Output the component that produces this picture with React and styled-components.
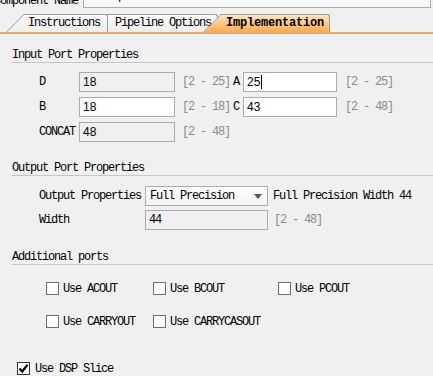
import React from "react";
import styled, { createGlobalStyle } from "styled-components";

const Global = createGlobalStyle`
  html, body { margin: 0; padding: 0; background: #f0f0f0; }
  body {
    font-family: "Liberation Mono", "DejaVu Sans Mono", monospace;
    font-size: 12px;
    letter-spacing: -1.2px;
    color: #000;
    overflow: hidden;
  }
`;

const Page = styled.div`
  width: 433px;
  height: 376px;
  overflow: hidden;
  background: #f0f0f0;
`;

const Header = styled.div`
  display: flex;
  align-items: flex-end;
  height: 8px;
  overflow: hidden;
`;

const HeaderLabel = styled.span`
  margin-left: -6px;
  width: 89px;
  flex: none;
  line-height: 16px;
  margin-bottom: -1px;
  white-space: nowrap;
`;

const NameField = styled.div`
  box-sizing: border-box;
  width: 348px;
  height: 20px;
  flex: none;
  border: 1px solid #acacac;
  background: #f7f7f7;
  padding: 0 4px;
  line-height: 14px;
`;

const TabBar = styled.div`
  display: flex;
  align-items: flex-end;
  margin-top: 5px;
  height: 19px;
  padding-left: 25px;
  border-bottom: 2px solid #f5a452;
`;

const Tab = styled.div`
  position: relative;
  z-index: ${(p) => p.$z};
  box-sizing: border-box;
  height: 18px;
  width: ${(p) => p.$w}px;
  margin-left: ${(p) => p.$ml || 0}px;
  padding-left: ${(p) => p.$pl}px;
  border-top: 1px solid #9c9c9c;
  border-right: 1px solid #9c9c9c;
  border-top-right-radius: 3px;
  background: ${(p) =>
    p.$active
      ? "linear-gradient(to bottom, #ffe6c2, #ffa94f)"
      : "linear-gradient(to bottom, #fbfbfb, #ededed)"};
  font-weight: ${(p) => (p.$active ? "bold" : "normal")};
  letter-spacing: ${(p) => (p.$active ? "-0.2px" : "-1.2px")};
  line-height: 17px;
  white-space: nowrap;
  &::before {
    content: "";
    position: absolute;
    z-index: -1;
    top: -1px;
    bottom: 0;
    left: -19px;
    width: 21px;
    background: inherit;
    border-top: 1px solid #9c9c9c;
    border-left: 1px solid #9c9c9c;
    transform: skewX(-45deg);
    transform-origin: bottom left;
  }
`;

const Content = styled.div`
  padding-left: 12px;
`;

const SectionHeading = styled.div`
  margin-top: ${(p) => p.$mt}px;
  height: 14px;
  line-height: 14px;
  border-bottom: 1px solid #c6c6c6;
  white-space: nowrap;
`;

const InputGrid = styled.div`
  display: grid;
  grid-template-columns: 40px 96px 58px 10px 94px auto;
  grid-auto-rows: 20px;
  row-gap: 5px;
  align-items: center;
  margin-top: 9px;
  padding-left: 27px;
`;

const OutputGrid = styled.div`
  display: grid;
  grid-template-columns: 106px 123px auto;
  grid-auto-rows: 20px;
  row-gap: 4px;
  align-items: center;
  margin-top: 10px;
  padding-left: 27px;
`;

const Label = styled.span`
  white-space: nowrap;
`;

const Field = styled.div`
  box-sizing: border-box;
  height: 20px;
  border: 1px solid #acacac;
  background: ${(p) => (p.$disabled ? "#f0f0f0" : "#ffffff")};
  padding-left: ${(p) => p.$pl || 3}px;
  display: flex;
  align-items: center;
  font-family: ${(p) =>
    p.$mono ? '"Liberation Mono", monospace' : '"Liberation Sans", Arial, sans-serif'};
  letter-spacing: ${(p) => (p.$mono ? "-1.2px" : "0")};
  font-size: 12px;
`;

const Caret = styled.span`
  display: inline-block;
  width: 1px;
  height: 14px;
  background: #000;
  margin-left: 1px;
`;

const Range = styled.span`
  color: #8c8c8c;
  padding-left: ${(p) => p.$pl}px;
  white-space: nowrap;
`;

const Note = styled.span`
  padding-left: 5px;
  white-space: nowrap;
`;

const Select = styled.div`
  box-sizing: border-box;
  height: 20px;
  border: 1px solid #acacac;
  background: linear-gradient(to bottom, #fdfdfd, #f4f4f4);
  padding-left: 4px;
  padding-right: 5px;
  display: flex;
  align-items: center;
  white-space: nowrap;
`;

const Arrow = styled.span`
  margin-left: auto;
  width: 0;
  height: 0;
  border-left: 4px solid transparent;
  border-right: 4px solid transparent;
  border-top: 5px solid #555;
`;

const CheckGrid = styled.div`
  display: grid;
  grid-template-columns: 107px 125px auto;
  grid-auto-rows: 13px;
  row-gap: 20px;
  margin-top: 17px;
  padding-left: 34px;
`;

const CheckItem = styled.label`
  display: flex;
  align-items: center;
  gap: ${(p) => p.$gap || 4}px;
  white-space: nowrap;
  height: 13px;
`;

const Box = styled.span`
  box-sizing: border-box;
  width: 13px;
  height: 13px;
  flex: none;
  border: 1px solid ${(p) => (p.$checked ? "#333" : "#707070")};
  background: #fff;
  display: flex;
  align-items: center;
  justify-content: center;
`;

const DspRow = styled.div`
  margin-top: 34px;
  padding-left: 5px;
`;

function Check({ checked, children, gap }) {
  return (
    <CheckItem $gap={gap}>
      <Box $checked={checked}>
        {checked && (
          <svg width="11" height="11" viewBox="0 0 11 11">
            <path d="M1.5 5.5 L4.2 8.5 L9.5 1.8" fill="none" stroke="#000" strokeWidth="2.2" />
          </svg>
        )}
      </Box>
      <span>{children}</span>
    </CheckItem>
  );
}

export default function App() {
  return (
    <Page>
      <Global />
      <Header>
        <HeaderLabel>Component Name</HeaderLabel>
        <NameField>multiplus</NameField>
      </Header>
      <TabBar>
        <Tab $z={3} $w={83} $pl={3}>Instructions</Tab>
        <Tab $z={2} $w={110} $pl={7}>Pipeline Options</Tab>
        <Tab $z={4} $w={108} $pl={4} $ml={4} $active>
          Implementation
        </Tab>
      </TabBar>
      <Content>
        <SectionHeading $mt={14}>Input Port Properties</SectionHeading>
        <InputGrid>
          <Label>D</Label>
          <Field $disabled>18</Field>
          <Range $pl={7}>[2 - 25]</Range>
          <Label>A</Label>
          <Field>
            25<Caret />
          </Field>
          <Range $pl={8}>[2 - 25]</Range>

          <Label>B</Label>
          <Field>18</Field>
          <Range $pl={7}>[2 - 18]</Range>
          <Label>C</Label>
          <Field>43</Field>
          <Range $pl={8}>[2 - 48]</Range>

          <Label>CONCAT</Label>
          <Field $disabled>48</Field>
          <Range $pl={7}>[2 - 48]</Range>
        </InputGrid>

        <SectionHeading $mt={19}>Output Port Properties</SectionHeading>
        <OutputGrid>
          <Label>Output Properties</Label>
          <Select>
            Full Precision
            <Arrow />
          </Select>
          <Note>Full Precision Width 44</Note>

          <Label>Width</Label>
          <Field $disabled $mono>
            44
          </Field>
          <Range $pl={6}>[2 - 48]</Range>
        </OutputGrid>

        <SectionHeading $mt={20}>Additional ports</SectionHeading>
        <CheckGrid>
          <Check>Use ACOUT</Check>
          <Check>Use BCOUT</Check>
          <Check>Use PCOUT</Check>
          <Check>Use CARRYOUT</Check>
          <Check>Use CARRYCASOUT</Check>
        </CheckGrid>

        <DspRow>
          <Check checked gap={5}>
            Use DSP Slice
          </Check>
        </DspRow>
      </Content>
    </Page>
  );
}
